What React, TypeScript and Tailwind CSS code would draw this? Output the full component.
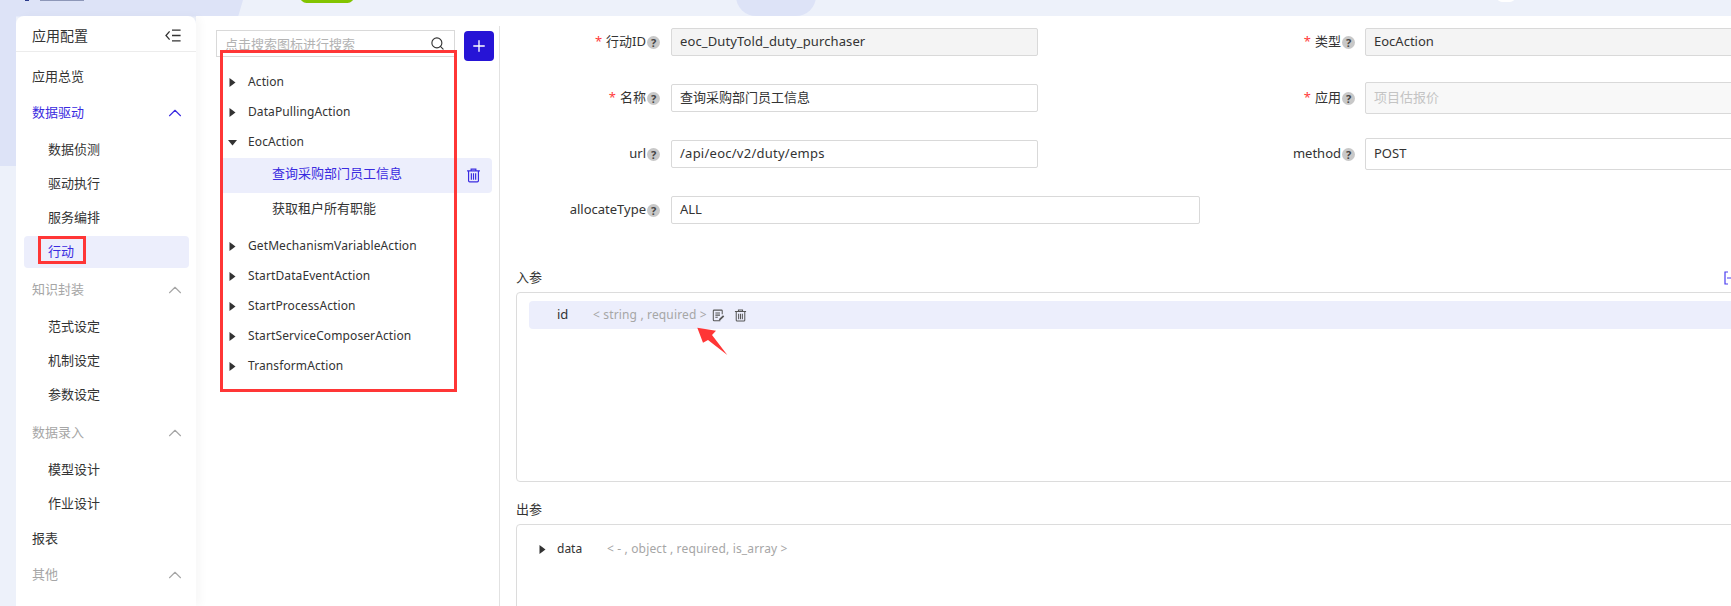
import React from "react";
import { ChevronUp, Search, Plus } from "lucide-react";

const FONT = "font-['Noto_Sans','Noto_Sans_CJK_SC',sans-serif]";

function Item({ text, className = "" }: { text: string; className?: string }) {
  return <div className={`flex h-[34px] items-center pl-4 text-[13px] text-[#333] ${className}`}>{text}</div>;
}

function Sub({ text }: { text: string }) {
  return <div className="flex h-[34px] items-center pl-8 text-[13px] text-[#333]">{text}</div>;
}

function Group({ text, active, className = "" }: { text: string; active?: boolean; className?: string }) {
  return (
    <div
      className={`flex h-[34px] items-center justify-between pl-4 pr-[10px] text-[13px] ${
        active ? "text-[#3a2be0]" : "text-[#a6a6a6]"
      } ${className}`}
    >
      <span>{text}</span>
      <ChevronUp className="h-[22px] w-[22px]" strokeWidth={1.2} />
    </div>
  );
}

function Caret({ open }: { open?: boolean }) {
  return (
    <svg width="9" height="9" viewBox="0 0 9 9" className="shrink-0 fill-[#333]">
      {open ? <path d="M0 2h9L4.5 7.5z" /> : <path d="M1.5 0l6 4.5-6 4.5z" />}
    </svg>
  );
}

function TreeRow({ text, open }: { text: string; open?: boolean }) {
  return (
    <div className="flex h-[30px] items-center pl-[5px] text-[12px] tracking-[0.1px] text-[#333]">
      <Caret open={open} />
      <span className="ml-[11px]">{text}</span>
    </div>
  );
}

function TrashIcon({ className = "" }: { className?: string }) {
  return (
    <svg viewBox="0 0 14 14" fill="none" stroke="currentColor" strokeWidth="1.1" className={className}>
      <path d="M1 2.6h12M4.8 2.4V1h4.4v1.4M2.4 2.8v9.2c0 .6.4 1 1 1h7.2c.6 0 1-.4 1-1V2.8M5 5v6M7 5v6M9 5v6" />
    </svg>
  );
}

function NoteIcon({ className = "" }: { className?: string }) {
  return (
    <svg viewBox="0 0 14 14" fill="none" stroke="currentColor" strokeWidth="1.1" className={className}>
      <path d="M9 12.6H2.2c-.5 0-.8-.3-.8-.8V2c0-.5.3-.8.8-.8h8c.5 0 .8.3.8.8v3.6M3.6 4.2h5M3.6 6.6h5M3.6 9h2.6" />
      <path d="M7.4 12.4l.5-2 4-3.6 1.3 1.4-4 3.7z" fill="currentColor" stroke="none" />
    </svg>
  );
}

function Help() {
  return (
    <span className="ml-px flex h-[13px] w-[13px] shrink-0 items-center justify-center rounded-full bg-[#c8c8c8] text-[11px] font-bold leading-none text-[#444]">
      ?
    </span>
  );
}

function Label({ text, required, width }: { text: string; required?: boolean; width: string }) {
  return (
    <div className={`flex shrink-0 items-center justify-end text-[13px] text-[#333] ${width}`}>
      {required && <span className="mr-1 text-[#ff3b3b]">*</span>}
      <span>{text}</span>
      <Help />
    </div>
  );
}

function Input({ value, className = "" }: { value: string; className?: string }) {
  return (
    <div className={`flex items-center rounded-[2px] border border-[#d9d9d9] pl-2 text-[13px] text-[#333] ${className}`}>
      {value}
    </div>
  );
}

const actionsBefore = ["Action", "DataPullingAction"];
const actionsAfter = [
  "GetMechanismVariableAction",
  "StartDataEventAction",
  "StartProcessAction",
  "StartServiceComposerAction",
  "TransformAction",
];

export default function App() {
  return (
    <div className={`relative h-[606px] w-[1731px] overflow-hidden bg-[#edf1fa] ${FONT}`}>
      {/* background decoration behind the cards */}
      <div className="absolute left-0 top-0 h-[166px] w-[243px] bg-[#dde3f7] [clip-path:polygon(0_0,100%_0,98%_10%,16px_10%,16px_100%,0_100%)]" />
      <div className="absolute left-[736px] top-[-24px] h-10 w-[80px] rounded-full bg-[#dde3f7]" />
      <div className="absolute left-[300px] top-[-10px] h-[13px] w-[54px] rounded-full bg-[#82c400]" />
      <div className="absolute left-[1497px] top-[-8px] h-[10px] w-[18px] rounded-full bg-white" />
      <div className="absolute left-[25px] top-0 h-px w-[4px] bg-[#2a3a8c]" />
      <div className="absolute left-[40px] top-0 h-px w-[44px] bg-[#8d97b8]" />

      <div className="relative flex h-full pl-4 pt-4">
        {/* sidebar */}
        <aside className="z-10 h-full w-[180px] shrink-0 rounded-t-lg bg-white shadow-[5px_0_8px_rgba(0,0,0,0.03)]">
          <div className="flex h-9 items-center justify-between border-b border-[#ececec] pl-4 pr-[15px] pt-1 text-[14px] text-[#333]">
            <span>应用配置</span>
            <svg width="16" height="13" viewBox="0 0 16 13" fill="none" stroke="#333" strokeWidth="1.3">
              <path d="M4.6 2.4L1 6.5l3.6 4.1M7 1.2h8.6M7 6.5h8.6M7 11.8h8.6" />
            </svg>
          </div>
          <div className="pt-2">
            <Item text="应用总览" />
            <Group text="数据驱动" active className="mt-[2px]" />
            <div className="mt-[3px]">
              <Sub text="数据侦测" />
              <Sub text="驱动执行" />
              <Sub text="服务编排" />
            </div>
            <div className="ml-2 mr-[7px] mt-px flex h-8 items-center rounded bg-[#eceefc] pl-6 text-[13px] text-[#3a2be0]">
              行动
            </div>
            <Group text="知识封装" className="mt-[5px]" />
            <div className="mt-[3px]">
              <Sub text="范式设定" />
              <Sub text="机制设定" />
              <Sub text="参数设定" />
            </div>
            <Group text="数据录入" className="mt-1" />
            <div className="mt-[3px]">
              <Sub text="模型设计" />
              <Sub text="作业设计" />
            </div>
            <Item text="报表" className="mt-px" />
            <Group text="其他" className="mt-[2px]" />
          </div>
        </aside>

        {/* action tree */}
        <section className="h-full w-[304px] shrink-0 bg-white pl-5">
          <div className="mt-[10px] h-full border-r border-[#e2e2e2] pt-1">
            <div className="flex items-start">
              <div className="flex h-[27px] w-[239px] items-center justify-between border border-[#d9d9d9] pl-2 pr-[9px] text-[13px] text-[#b3b3b3]">
                <span className="pt-[3px]">点击搜索图标进行搜索</span>
                <Search className="-mt-px h-[15px] w-[15px] text-[#333]" strokeWidth={1.8} />
              </div>
              <button className="ml-[9px] mt-px flex h-[30px] w-[30px] items-center justify-center rounded bg-[#2614d6] text-white">
                <Plus className="h-[18px] w-[18px]" strokeWidth={1.8} />
              </button>
            </div>
            <div className="ml-[7px] mt-[6px] w-[269px]">
              {actionsBefore.map((a) => (
                <TreeRow key={a} text={a} />
              ))}
              <TreeRow text="EocAction" open />
              <div className="mt-px flex h-[35px] items-center justify-between rounded-r bg-[#eceefc] pl-[49px] pr-[11px] text-[13px] text-[#3a2be0]">
                <span className="-mt-[3px]">查询采购部门员工信息</span>
                <TrashIcon className="h-[15px] w-[15px]" />
              </div>
              <div className="flex h-8 items-center pl-[49px] text-[13px] text-[#333]">获取租户所有职能</div>
              <div className="mt-[6px]">
                {actionsAfter.map((a) => (
                  <TreeRow key={a} text={a} />
                ))}
              </div>
            </div>
          </div>
        </section>

        {/* form */}
        <main className="h-full min-w-0 flex-1 bg-white pl-4 pt-3">
          <div className="flex">
            <div className="flex w-[684px] shrink-0 flex-col">
              {[
                {
                  label: "行动ID",
                  value: "eoc_DutyTold_duty_purchaser",
                  required: true,
                  box: "w-[367px] bg-[#f4f4f4] tracking-[0.12px]",
                },
                { label: "名称", value: "查询采购部门员工信息", required: true, box: "w-[367px]" },
                { label: "url", value: "/api/eoc/v2/duty/emps", box: "w-[367px] tracking-[0.25px]" },
                { label: "allocateType", value: "ALL", box: "w-[529px]" },
              ].map((f) => (
                <div key={f.label} className="mb-7 flex h-7 items-stretch">
                  <Label text={f.label} required={f.required} width="w-[144px]" />
                  <Input value={f.value} className={`ml-[11px] ${f.box}`} />
                </div>
              ))}
            </div>
            <div className="flex flex-col">
              <div className="flex h-7 items-stretch">
                <Label text="类型" required width="w-[155px]" />
                <Input value="EocAction" className="ml-[10px] w-[500px] bg-[#f4f4f4]" />
              </div>
              <div className="mt-[26px] flex h-8 items-stretch">
                <Label text="应用" required width="w-[155px]" />
                <Input value="项目估报价" className="ml-[10px] w-[500px] rounded bg-[#f8f8f8] text-[#c4c4c4]" />
              </div>
              <div className="mt-6 flex h-8 items-stretch">
                <Label text="method" width="w-[155px]" />
                <Input value="POST" className="ml-[10px] w-[500px] rounded" />
              </div>
            </div>
          </div>

          <div className="relative mt-4 flex h-5 items-center text-[13px] text-[#333]">
            <span>入参</span>
            <svg
              viewBox="0 0 14 14"
              fill="none"
              stroke="#4a3cf0"
              strokeWidth="1.2"
              className="absolute left-[1208px] top-[3px] h-[14px] w-[14px]"
            >
              <path d="M4 1H1v12h3M3 7h8M10 1h3v12h-3" />
            </svg>
          </div>
          <div className="mt-1 h-[190px] w-[1300px] rounded border border-[#dcdcdc] pl-3 pt-2">
            <div className="flex h-7 items-center rounded-sm bg-[#eceefc] pl-7 text-[13px]">
              <span className="w-9 text-[#333]">id</span>
              <span className="text-[12px] tracking-[0.15px] text-[#a6a6a6]">&lt; string , required &gt;</span>
              <NoteIcon className="ml-[5px] h-[13px] w-[13px] text-[#555]" />
              <TrashIcon className="ml-[9px] h-[13px] w-[13px] text-[#555]" />
            </div>
          </div>

          <div className="mt-[18px] flex h-5 items-center text-[13px] text-[#333]">出参</div>
          <div className="mt-1 h-[120px] w-[1300px] rounded border border-[#dcdcdc] pl-[21px] pt-[14px]">
            <div className="flex h-[20px] items-center text-[12px]">
              <Caret />
              <span className="ml-[10px] w-[50px] text-[#333]">data</span>
              <span className="tracking-[0.15px] text-[#a6a6a6]">&lt; - , object , required, is_array &gt;</span>
            </div>
          </div>
        </main>
      </div>

      {/* red annotations drawn over the screenshot */}
      <div className="absolute left-[38px] top-[236px] z-20 h-[28px] w-[48px] border-[3px] border-[#ff3636]" />
      <div className="absolute left-[220px] top-[50px] z-20 h-[342px] w-[237px] border-[3px] border-[#ff3636]" />
      <svg className="absolute left-[695px] top-[325px] z-20" width="36" height="32" viewBox="0 0 36 32">
        <path d="M2.3 2.7L21 5.7 17 10 32.3 30 13 15 8 17.7z" fill="#ff3636" />
      </svg>
    </div>
  );
}
